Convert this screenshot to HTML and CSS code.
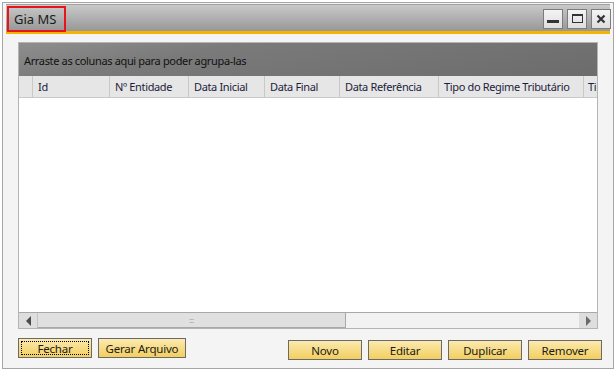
FILE: index.html
```html
<!DOCTYPE html>
<html lang="pt">
<head>
    <meta charset="UTF-8">
    <title>Gia MS</title>
    <link rel="stylesheet" href="styles.css">
</head>
<body>
    <div class="window">
        <div class="titlebar">
            <span class="title">Gia MS</span>
            <div class="title-buttons">
                <button class="tb-btn"><span class="ico-min"></span></button>
                <button class="tb-btn"><span class="ico-max"></span></button>
                <button class="tb-btn"><svg width="10" height="10" viewBox="0 0 10 10"><path d="M1.5 1.5 L8.5 8.5 M8.5 1.5 L1.5 8.5" stroke="#333" stroke-width="2.2"/></svg></button>
            </div>
        </div>

        <div class="content">
            <div class="grid">
                <div class="group-panel">Arraste as colunas aqui para poder agrupa-las</div>
                <div class="header-row">
                    <div class="col col-ind"></div>
                    <div class="col" style="width:77px">Id</div>
                    <div class="col" style="width:79px">Nº Entidade</div>
                    <div class="col" style="width:76px">Data Inicial</div>
                    <div class="col" style="width:75px">Data Final</div>
                    <div class="col" style="width:99px">Data Referência</div>
                    <div class="col" style="width:145px">Tipo do Regime Tributário</div>
                    <div class="col col-last">Ti</div>
                </div>
                <div class="grid-body"></div>
                <div class="hscroll">
                    <div class="sb-btn"><span class="arr-left"></span></div>
                    <div class="sb-thumb"><span class="grip">:::</span></div>
                    <div class="sb-track"></div>
                    <div class="sb-btn"><span class="arr-right"></span></div>
                </div>
            </div>

            <div class="button-row">
                <div class="left-buttons">
                    <button class="btn btn-focus" style="width:74px"><span>Fechar</span></button>
                    <button class="btn" style="width:88px">Gerar Arquivo</button>
                </div>
                <div class="right-buttons">
                    <button class="btn">Novo</button>
                    <button class="btn">Editar</button>
                    <button class="btn">Duplicar</button>
                    <button class="btn">Remover</button>
                </div>
            </div>
        </div>
    </div>
</body>
</html>
```

FILE: styles.css
```css
* {
    padding: 0;
    margin: 0;
    box-sizing: border-box;
}

body {
    background: #ffffff;
    font-family: 'Noto Sans', 'Open Sans', sans-serif;
    font-size: 11px;
    letter-spacing: -0.35px;
    color: #1e1e1e;
}

.window {
    margin: 2px 0 0 2px;
    width: 612px;
    height: 367px;
    border: 1px solid #a6a6a6;
    background: #f4f4f4;
    padding: 1px 2px 0 3px;
}

.titlebar {
    height: 30px;
    display: flex;
    align-items: center;
    justify-content: space-between;
    background: linear-gradient(to bottom, #c9c9c9, #979797);
    border-top: 1px solid #a0a0a0;
    border-bottom: 3px solid #f5b400;
    padding-left: 1px;
    width: 604px;
}

.title {
    font-size: 13px;
    letter-spacing: 0;
    color: #1a1a1a;
    border: 2px solid #e8141b;
    height: 26px;
    line-height: 22px;
    padding: 0 8px 0 5px;
    margin-top: 2px;
}

.title-buttons {
    display: flex;
    gap: 4px;
    margin-top: 1px;
    margin-right: -1px;
}

.tb-btn {
    width: 20px;
    height: 20px;
    border: 1px solid #7c7c7c;
    background: linear-gradient(to bottom, #f4f4f4, #dedede);
    display: flex;
    align-items: center;
    justify-content: center;
}

.ico-min {
    width: 12px;
    height: 3px;
    background: #333;
    margin-top: 5px;
}

.ico-max {
    width: 11px;
    height: 9px;
    border: 1px solid #333;
    border-top-width: 2px;
}

.content {
    padding: 8px 0 0 12px;
}

.grid {
    width: 580px;
    height: 287px;
    border: 1px solid #b4b4b4;
    background: #ffffff;
    display: flex;
    flex-direction: column;
}

.group-panel {
    height: 33px;
    background: linear-gradient(170deg, #8e8e8e 0%, #7a7a7a 30%, #6c6c6c 100%);
    color: #111;
    padding: 10px 0 0 5px;
}

.header-row {
    height: 22px;
    display: flex;
    background: #e6e6e6;
    border-bottom: 1px solid #c9c9c9;
    overflow: hidden;
    color: #1c1c3c;
}

.col {
    flex: none;
    border-right: 1px solid #c8c8c8;
    padding: 3px 0 0 5px;
    white-space: nowrap;
}

.col-ind {
    width: 14px;
    padding: 0;
}

.col-last {
    flex: 1;
    border-right: none;
    overflow: hidden;
    padding-left: 4px;
}

.grid-body {
    flex: 1;
}

.hscroll {
    height: 16px;
    display: flex;
    background: #f2f2f2;
    border-top: 1px solid #a8a8a8;
}

.sb-btn {
    width: 18px;
    background: #dedede;
    display: flex;
    align-items: center;
    justify-content: center;
}

.arr-left {
    border-top: 5px solid transparent;
    border-bottom: 5px solid transparent;
    border-right: 5px solid #4a4a4a;
}

.arr-right {
    border-top: 5px solid transparent;
    border-bottom: 5px solid transparent;
    border-left: 5px solid #6a6a6a;
}

.sb-thumb {
    width: 309px;
    background: #e0e0e0;
    border-left: 1px solid #c4c4c4;
    border-right: 1px solid #a8a8a8;
    border-bottom: 1px solid #a8a8a8;
    display: flex;
    align-items: center;
    justify-content: center;
}

.grip {
    font-size: 7px;
    color: #9a9a9a;
}

.sb-track {
    flex: 1;
}

.button-row {
    display: flex;
    justify-content: space-between;
    margin-top: 9px;
    width: 584px;
}

.left-buttons,
.right-buttons {
    display: flex;
    gap: 6px;
}

.right-buttons {
    margin-top: 2px;
}

.btn {
    width: 74px;
    height: 20px;
    border: 1px solid #6a6a6a;
    background: linear-gradient(to bottom, #fbeab0, #f3cf5e);
    font-family: 'Noto Sans', 'Open Sans', sans-serif;
    font-size: 11.5px;
    letter-spacing: -0.2px;
    color: #1a1a1a;
    display: flex;
    align-items: center;
    justify-content: center;
    padding: 0 2px;
}

.btn-focus span {
    display: flex;
    align-items: center;
    justify-content: center;
    width: 100%;
    height: 14px;
    border: 1px dotted #000;
}
```
